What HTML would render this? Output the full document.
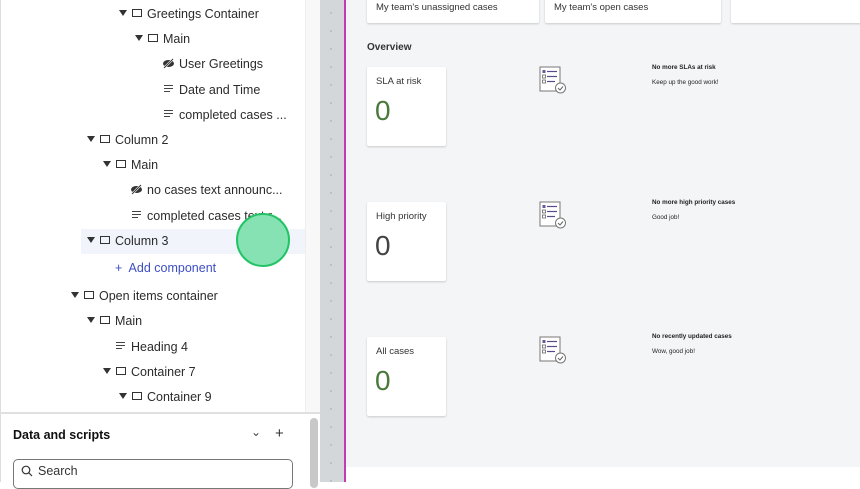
<!DOCTYPE html>
<html><head><meta charset="utf-8"><style>
*{margin:0;padding:0;box-sizing:border-box}
body{width:860px;height:482px;overflow:hidden;position:relative;background:#fff;font-family:"Liberation Sans",sans-serif;color:#222}
.abs{position:absolute}
.row{position:absolute;font-size:12.5px;color:#2b2b2b;white-space:nowrap;line-height:16px}
.tri{position:absolute;width:0;height:0;border-left:4px solid transparent;border-right:4px solid transparent;border-top:6px solid #333}
.box{position:absolute;width:10px;height:8px;border:1.2px solid #333}
.lines{position:absolute;width:9px;height:8px}
.lines i{display:block;height:1.3px;background:#444;margin-bottom:1.6px}
.card{position:absolute;background:#fff;border-radius:2px;box-shadow:0 1px 2px rgba(0,0,0,.18)}
.card .t{position:absolute;left:9px;top:9px;font-size:9.5px;color:#333}
.card .n{position:absolute;left:8px;top:28px;font-size:28px;font-weight:300;color:#444}
.msg{position:absolute;left:652px;font-size:6.3px;color:#222}
.msg b{display:block;font-weight:bold;margin-bottom:8px}
</style></head><body>
<div class="abs" style="left:0;top:0;width:1px;height:482px;background:#ddd"></div>
<div class="abs" style="left:305px;top:0;width:15px;height:413px;background:#f8f8f8;border-left:1px solid #eee"></div>
<div class="abs" style="left:81px;top:229px;width:224px;height:25px;background:#f1f4fa"></div>

<div class="tri" style="left:119px;top:10px"></div><div class="box" style="left:132px;top:9px"></div><div class="row" style="left:147px;top:6px">Greetings Container</div>
<div class="tri" style="left:135px;top:35px"></div><div class="box" style="left:148px;top:34px"></div><div class="row" style="left:163px;top:31px">Main</div>
<svg class="abs" style="left:162px;top:58px" width="13" height="11" viewBox="0 0 13 11"><ellipse cx="6.5" cy="5.5" rx="5.5" ry="3.5" fill="#333"/><line x1="2" y1="10" x2="11" y2="1" stroke="#fff" stroke-width="2.2"/><line x1="2" y1="10" x2="11" y2="1" stroke="#333" stroke-width="1"/></svg><div class="row" style="left:179px;top:56px">User Greetings</div>
<div class="lines" style="left:164px;top:85px"><i></i><i></i><i style="width:6px"></i></div><div class="row" style="left:179px;top:82px">Date and Time</div>
<div class="lines" style="left:164px;top:110px"><i></i><i></i><i style="width:6px"></i></div><div class="row" style="left:179px;top:107px">completed cases ...</div>
<div class="tri" style="left:87px;top:136px"></div><div class="box" style="left:100px;top:135px"></div><div class="row" style="left:115px;top:132px">Column 2</div>
<div class="tri" style="left:103px;top:161px"></div><div class="box" style="left:116px;top:160px"></div><div class="row" style="left:131px;top:157px">Main</div>
<svg class="abs" style="left:130px;top:184px" width="13" height="11" viewBox="0 0 13 11"><ellipse cx="6.5" cy="5.5" rx="5.5" ry="3.5" fill="#333"/><line x1="2" y1="10" x2="11" y2="1" stroke="#fff" stroke-width="2.2"/><line x1="2" y1="10" x2="11" y2="1" stroke="#333" stroke-width="1"/></svg><div class="row" style="left:147px;top:182px">no cases text announc...</div>
<div class="lines" style="left:132px;top:211px"><i></i><i></i><i style="width:6px"></i></div><div class="row" style="left:147px;top:208px">completed cases text r...</div>
<div class="tri" style="left:87px;top:237px"></div><div class="box" style="left:100px;top:236px"></div><div class="row" style="left:115px;top:233px">Column 3</div>
<div class="row" style="left:115px;top:260px;color:#3d4fc2">+&nbsp; Add component</div>
<div class="tri" style="left:71px;top:292px"></div><div class="box" style="left:84px;top:291px"></div><div class="row" style="left:99px;top:288px">Open items container</div>
<div class="tri" style="left:87px;top:317px"></div><div class="box" style="left:100px;top:316px"></div><div class="row" style="left:115px;top:313px">Main</div>
<div class="lines" style="left:116px;top:342px"><i></i><i></i><i style="width:6px"></i></div><div class="row" style="left:131px;top:339px">Heading 4</div>
<div class="tri" style="left:103px;top:368px"></div><div class="box" style="left:116px;top:367px"></div><div class="row" style="left:131px;top:364px">Container 7</div>
<div class="tri" style="left:119px;top:393px"></div><div class="box" style="left:132px;top:392px"></div><div class="row" style="left:147px;top:389px">Container 9</div>

<div class="abs" style="left:236px;top:213px;width:54px;height:54px;border-radius:50%;background:#86e2b3;border:2.5px solid #20c464"></div>

<div class="abs" style="left:0;top:412px;width:320px;height:2px;background:#e0e0e0"></div>
<div class="abs" style="left:310px;top:418px;width:8px;height:70px;border-radius:4px;background:#c8c8c8"></div>
<div class="abs" style="left:13px;top:428px;font-size:12.5px;font-weight:bold;color:#111">Data and scripts</div>
<div class="abs" style="left:251px;top:425px;font-size:12px;color:#444">&#8964;</div>
<div class="abs" style="left:275px;top:425px;font-size:15px;color:#333">+</div>
<div class="abs" style="left:13px;top:459px;width:280px;height:30px;border:1px solid #777;border-radius:5px"></div>
<svg class="abs" style="left:21px;top:465px" width="12" height="12" viewBox="0 0 12 12"><circle cx="5" cy="5" r="3.8" fill="none" stroke="#333" stroke-width="1.2"/><line x1="7.8" y1="7.8" x2="11" y2="11" stroke="#333" stroke-width="1.2"/></svg>
<div class="abs" style="left:38px;top:464px;font-size:12.5px;color:#333">Search</div>

<div class="abs" style="left:320px;top:0;width:24px;height:482px;background:#d3d7d9"></div>
<div class="abs" style="left:344px;top:0;width:2px;height:482px;background:#c43ab0"></div>
<svg class="abs" style="left:320px;top:0" width="24" height="482"><g fill="#b5babd">
<circle cx="11" cy="13" r="1"/><circle cx="11" cy="31" r="1"/><circle cx="11" cy="49" r="1"/><circle cx="11" cy="67" r="1"/><circle cx="11" cy="85" r="1"/><circle cx="11" cy="103" r="1"/><circle cx="11" cy="121" r="1"/><circle cx="11" cy="139" r="1"/><circle cx="11" cy="157" r="1"/><circle cx="11" cy="175" r="1"/><circle cx="11" cy="193" r="1"/><circle cx="11" cy="211" r="1"/><circle cx="11" cy="229" r="1"/><circle cx="11" cy="247" r="1"/><circle cx="11" cy="265" r="1"/><circle cx="11" cy="283" r="1"/><circle cx="11" cy="301" r="1"/><circle cx="11" cy="319" r="1"/><circle cx="11" cy="337" r="1"/><circle cx="11" cy="355" r="1"/><circle cx="11" cy="373" r="1"/><circle cx="11" cy="391" r="1"/><circle cx="11" cy="409" r="1"/><circle cx="11" cy="427" r="1"/><circle cx="11" cy="445" r="1"/><circle cx="11" cy="463" r="1"/><circle cx="11" cy="481" r="1"/></g></svg>

<div class="abs" style="left:346px;top:0;width:514px;height:467px;background:#f4f5f7"></div>
<div class="card" style="left:367px;top:-4px;width:172px;height:27px"><div class="abs" style="left:9px;top:6px;font-size:9.5px;color:#333">My team's unassigned cases</div></div>
<div class="card" style="left:545px;top:-4px;width:176px;height:27px"><div class="abs" style="left:9px;top:6px;font-size:9.5px;color:#333">My team's open cases</div></div>
<div class="card" style="left:731px;top:-4px;width:140px;height:27px"></div>
<div class="abs" style="left:367px;top:42px;font-size:10px;font-weight:bold;color:#333">Overview</div>

<div class="card" style="left:367px;top:67px;width:79px;height:79px"><div class="t">SLA at risk</div><div class="n" style="color:#4a7a3a">0</div></div>
<div class="card" style="left:367px;top:202px;width:79px;height:79px"><div class="t">High priority</div><div class="n">0</div></div>
<div class="card" style="left:367px;top:337px;width:79px;height:79px"><div class="t">All cases</div><div class="n" style="color:#4a7a3a">0</div></div>

<svg class="abs" style="left:539px;top:66px" width="28" height="28" viewBox="0 0 28 28"><rect x="1" y="1" width="20" height="24" fill="#fff" stroke="#777" stroke-width="1"/><rect x="3.5" y="4" width="3" height="3" fill="#6a5a9a"/><rect x="3.5" y="9" width="3" height="3" fill="none" stroke="#666" stroke-width=".8"/><rect x="3.5" y="14" width="3" height="3" fill="none" stroke="#666" stroke-width=".8"/><line x1="8" y1="5.5" x2="18" y2="5.5" stroke="#5a4a8a" stroke-width="1.2"/><line x1="8" y1="10.5" x2="18" y2="10.5" stroke="#5a4a8a" stroke-width="1.2"/><line x1="8" y1="15.5" x2="16" y2="15.5" stroke="#5a4a8a" stroke-width="1.2"/><circle cx="21.5" cy="22" r="5" fill="#fff" stroke="#777" stroke-width="1"/><path d="M19 22l2 2 3-3.5" fill="none" stroke="#666" stroke-width="1"/></svg>
<svg class="abs" style="left:539px;top:201px" width="28" height="28" viewBox="0 0 28 28"><rect x="1" y="1" width="20" height="24" fill="#fff" stroke="#777" stroke-width="1"/><rect x="3.5" y="4" width="3" height="3" fill="#6a5a9a"/><rect x="3.5" y="9" width="3" height="3" fill="none" stroke="#666" stroke-width=".8"/><rect x="3.5" y="14" width="3" height="3" fill="none" stroke="#666" stroke-width=".8"/><line x1="8" y1="5.5" x2="18" y2="5.5" stroke="#5a4a8a" stroke-width="1.2"/><line x1="8" y1="10.5" x2="18" y2="10.5" stroke="#5a4a8a" stroke-width="1.2"/><line x1="8" y1="15.5" x2="16" y2="15.5" stroke="#5a4a8a" stroke-width="1.2"/><circle cx="21.5" cy="22" r="5" fill="#fff" stroke="#777" stroke-width="1"/><path d="M19 22l2 2 3-3.5" fill="none" stroke="#666" stroke-width="1"/></svg>
<svg class="abs" style="left:539px;top:336px" width="28" height="28" viewBox="0 0 28 28"><rect x="1" y="1" width="20" height="24" fill="#fff" stroke="#777" stroke-width="1"/><rect x="3.5" y="4" width="3" height="3" fill="#6a5a9a"/><rect x="3.5" y="9" width="3" height="3" fill="none" stroke="#666" stroke-width=".8"/><rect x="3.5" y="14" width="3" height="3" fill="none" stroke="#666" stroke-width=".8"/><line x1="8" y1="5.5" x2="18" y2="5.5" stroke="#5a4a8a" stroke-width="1.2"/><line x1="8" y1="10.5" x2="18" y2="10.5" stroke="#5a4a8a" stroke-width="1.2"/><line x1="8" y1="15.5" x2="16" y2="15.5" stroke="#5a4a8a" stroke-width="1.2"/><circle cx="21.5" cy="22" r="5" fill="#fff" stroke="#777" stroke-width="1"/><path d="M19 22l2 2 3-3.5" fill="none" stroke="#666" stroke-width="1"/></svg>

<div class="msg" style="top:64px"><b>No more SLAs at risk</b>Keep up the good work!</div>
<div class="msg" style="top:199px"><b>No more high priority cases</b>Good job!</div>
<div class="msg" style="top:333px"><b>No recently updated cases</b>Wow, good job!</div>
</body></html>
